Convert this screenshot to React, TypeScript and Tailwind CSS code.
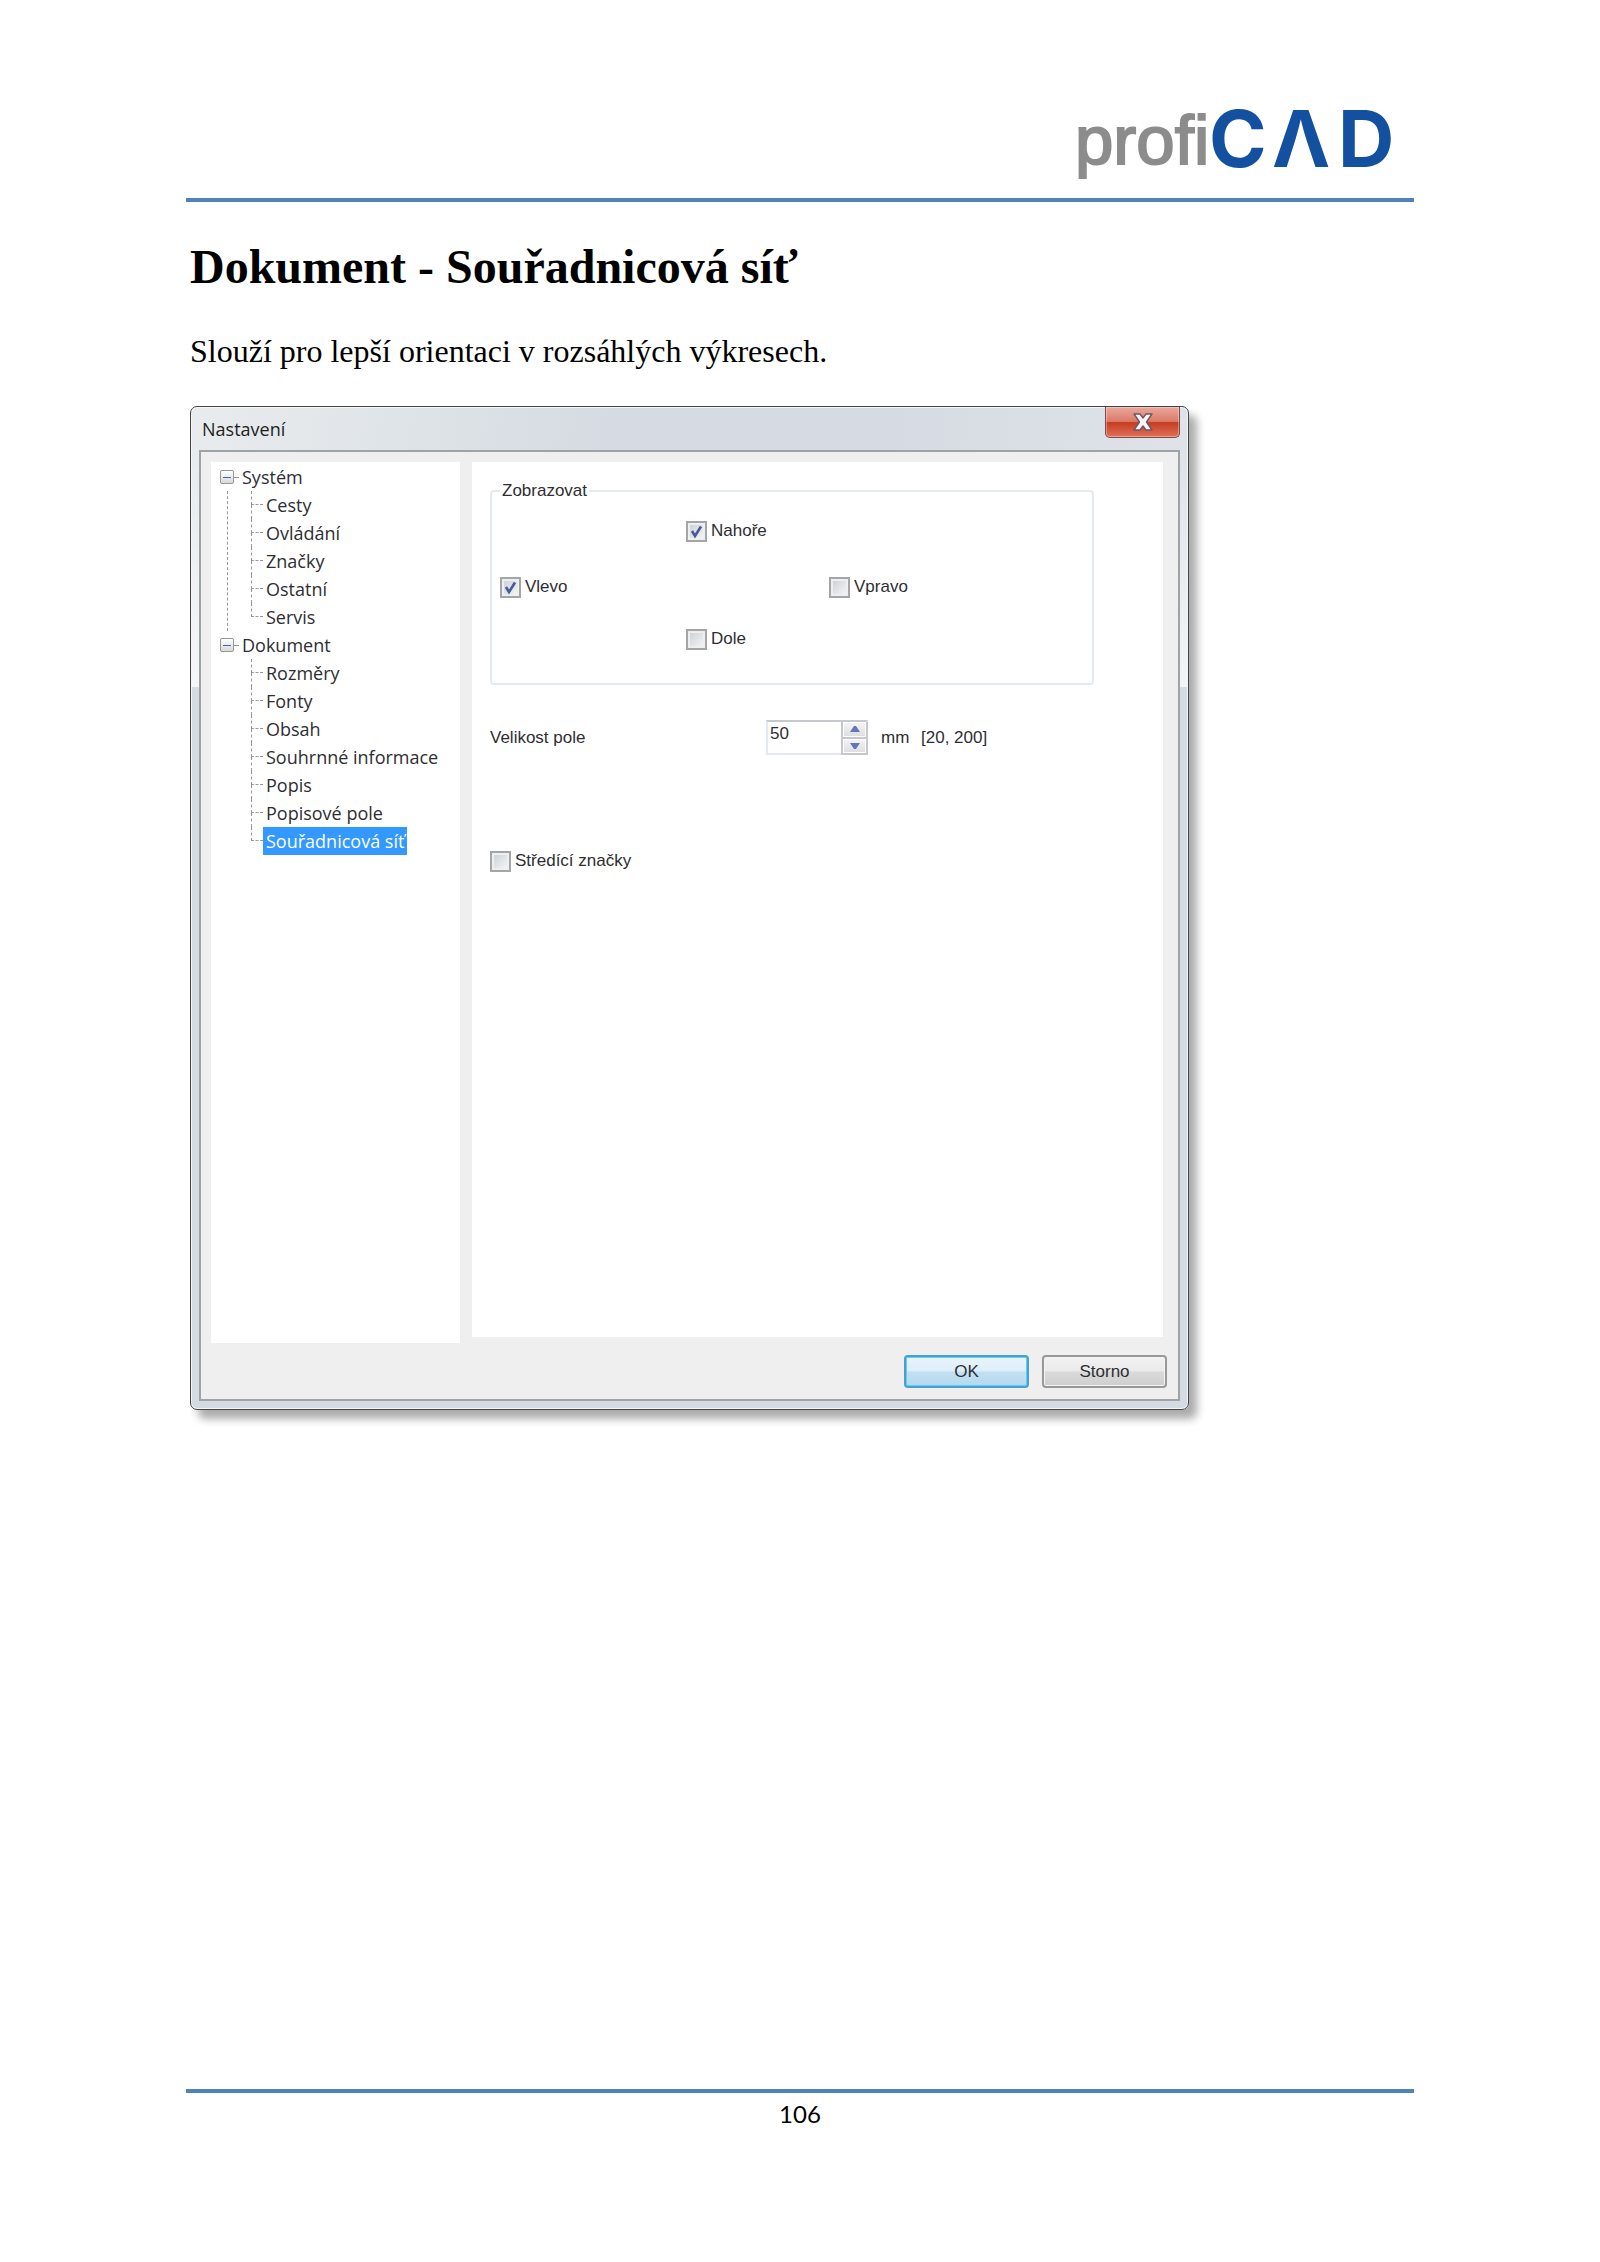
import { useState } from "react";

type TreeGroup = {
  label: string;
  items: string[];
};

const TREE: TreeGroup[] = [
  {
    label: "Systém",
    items: ["Cesty", "Ovládání", "Značky", "Ostatní", "Servis"],
  },
  {
    label: "Dokument",
    items: [
      "Rozměry",
      "Fonty",
      "Obsah",
      "Souhrnné informace",
      "Popis",
      "Popisové pole",
      "Souřadnicová síť",
    ],
  },
];

const MIN_SIZE = 20;
const MAX_SIZE = 200;

function Logo() {
  return (
    <svg width="330" height="100" viewBox="0 -20 330 100" role="img" aria-label="profiCAD">
      <text
        y="56"
        fontSize="69"
        fill="#8c8c8c"
        stroke="#8c8c8c"
        strokeWidth="2"
        className="font-['Liberation_Sans',sans-serif]"
      >
        profi
      </text>
      <text
        x="134 197 263"
        y="59"
        fontSize="78"
        fill="#1450a0"
        className="font-['Inter',sans-serif] font-bold"
      >
        CΛD
      </text>
    </svg>
  );
}

function Checkbox({ label, defaultChecked }: { label: string; defaultChecked?: boolean }) {
  return (
    <label className="flex h-6 w-fit items-center gap-1">
      <span className="relative flex">
        <input
          type="checkbox"
          defaultChecked={defaultChecked}
          className="peer size-[21px] appearance-none border-2 border-[#a3a5a6] bg-linear-to-br from-[#c9ced4] to-[#f8f8f8] shadow-[inset_0_0_0_2px_#eeeff0]"
        />
        <svg
          viewBox="0 0 21 21"
          className="pointer-events-none absolute inset-0 hidden size-[21px] peer-checked:block"
        >
          <path d="M6 10 L9 15 L15 5.5" fill="none" stroke="#465a9c" strokeWidth="2.6" />
        </svg>
      </span>
      {label}
    </label>
  );
}

function Tree({ selected, onSelect }: { selected: string; onSelect: (item: string) => void }) {
  return (
    <ul className="min-h-[881px] w-[249px] shrink-0 bg-white pt-px pl-[9px] font-['Open_Sans',sans-serif] text-[18px] leading-7 text-[#2e2e33]">
      {TREE.map((group, groupIndex) => {
        const isLastGroup = groupIndex === TREE.length - 1;
        return (
          <li key={group.label}>
            <div className="flex h-7 items-center">
              <button
                type="button"
                aria-label={`Sbalit ${group.label}`}
                className="flex size-[14px] items-center justify-center rounded-[2px] border border-[#979797] bg-linear-to-b from-white to-[#d9d9d9]"
              >
                <span className="h-px w-2 bg-[#4a61ad]" />
              </button>
              <span className="mr-[3px] w-[5px] border-t border-dashed border-[#999]" />
              {group.label}
            </div>
            <ul
              className={`ml-[7px] border-l border-dashed pl-[23px] ${
                isLastGroup ? "border-transparent" : "border-[#999]"
              }`}
            >
              {group.items.map((item, i) => (
                <li key={item} className="flex h-7">
                  <span className="flex w-3 flex-col">
                    <span className="h-1/2 border-b border-l border-dashed border-[#999]" />
                    {i < group.items.length - 1 && (
                      <span className="h-1/2 border-l border-dashed border-[#999]" />
                    )}
                  </span>
                  <button
                    type="button"
                    onClick={() => onSelect(item)}
                    className={`px-[3px] whitespace-nowrap ${
                      item === selected ? "bg-[#3399ff] text-white" : ""
                    }`}
                  >
                    {item}
                  </button>
                </li>
              ))}
            </ul>
          </li>
        );
      })}
    </ul>
  );
}

function SizeField() {
  const [size, setSize] = useState(50);
  const step = (delta: number) =>
    setSize((prev) => Math.min(MAX_SIZE, Math.max(MIN_SIZE, prev + delta)));

  return (
    <div className="mt-[35px] flex items-center">
      <label htmlFor="field-size" className="w-[276px]">
        Velikost pole
      </label>
      <div className="flex h-[35px] w-[102px] border-2 border-[#e3e9ef] border-t-[#c5c8cf]">
        <input
          id="field-size"
          type="text"
          inputMode="numeric"
          value={size}
          onChange={(e) => setSize(Number(e.target.value) || 0)}
          className="h-6 w-full min-w-0 flex-1 pl-0.5 outline-none"
        />
        <div className="-mr-0.5 -mb-0.5 flex w-[27px] shrink-0 flex-col gap-0.5 border-2 border-t-0 border-[#c6c7cd] bg-[#c6c7cd]">
          <button
            type="button"
            aria-label="Zvětšit"
            onClick={() => step(1)}
            className="flex flex-1 items-center justify-center border border-white bg-linear-to-b from-[#f4f4f4] to-[#dedfe2]"
          >
            <svg width="10" height="6" viewBox="0 0 10 6">
              <path d="M0 6 L4 0 H6 L10 6 Z" fill="#6476b8" />
            </svg>
          </button>
          <button
            type="button"
            aria-label="Zmenšit"
            onClick={() => step(-1)}
            className="flex flex-1 items-center justify-center border border-white bg-linear-to-b from-[#f4f4f4] to-[#dedfe2]"
          >
            <svg width="10" height="6" viewBox="0 0 10 6">
              <path d="M0 0 L4 6 H6 L10 0 Z" fill="#6476b8" />
            </svg>
          </button>
        </div>
      </div>
      <span className="ml-[13px] w-10">mm</span>
      <span>
        [{MIN_SIZE}, {MAX_SIZE}]
      </span>
    </div>
  );
}

function SettingsDialog() {
  const [selected, setSelected] = useState("Souřadnicová síť");

  return (
    <section className="mt-[35px] w-full max-w-[999px] rounded-[7px] border border-[#3f4447] bg-[linear-gradient(to_bottom,transparent_50px,rgba(255,255,255,0.6)_280px,#d5dbe2_280px),linear-gradient(100deg,#e9ecee,#dfe4e8_18%,#d6dbe3_36%,#d6dbe3_60%,#e4e8ec)] px-2 pb-2 shadow-[inset_0_0_0_1px_#f4f6f8,8px_9px_8px_rgba(0,0,0,0.33)]">
      <header className="flex h-[43px] items-start justify-between pl-[3px]">
        <h2 className="mt-2 font-['Open_Sans',sans-serif] text-[18px] leading-7 text-[#1e1e22]">
          Nastavení
        </h2>
        <button
          type="button"
          aria-label="Zavřít"
          className="flex h-[31px] w-[75px] items-center justify-center rounded-b-[5px] border border-t-0 border-[#7d4a48] bg-[linear-gradient(to_bottom,#eba89b,#dc7a68_48%,#c63c20_52%,#e0705a)] shadow-[inset_0_0_0_1px_rgba(255,255,255,0.35)]"
        >
          <svg width="20" height="18" viewBox="0 0 20 18">
            <path
              d="M1 1 H7 L10 5 L13 1 H19 L13.5 9 L19 17 H13 L10 13 L7 17 H1 L6.500 9 Z"
              fill="#f6f6f6"
              stroke="#6b5866"
              strokeWidth="1.400"
              strokeLinejoin="round"
            />
          </svg>
        </button>
      </header>

      <div className="border-2 border-[#9ea3a6] bg-[#efefef] pt-[10px] pb-[11px] pl-[10px]">
        <div className="flex items-start gap-3 pr-[15px]">
          <Tree selected={selected} onSelect={setSelected} />
          <div className="min-h-[875px] flex-1 bg-white pt-[17px] pr-[69px] pl-[18px] font-['Liberation_Sans',sans-serif] text-[17px] leading-6 text-[#2e2e32]">
            <fieldset className="rounded-[4px] border-2 border-[#e4ebf0] px-2 pb-8">
              <legend className="px-0.5">Zobrazovat</legend>
              <div className="grid grid-cols-[186px_143px_1fr] grid-rows-[56px_52px_24px] pt-4">
                <div className="col-start-2">
                  <Checkbox label="Nahoře" defaultChecked />
                </div>
                <div className="col-start-1 row-start-2">
                  <Checkbox label="Vlevo" defaultChecked />
                </div>
                <div className="col-start-3 row-start-2">
                  <Checkbox label="Vpravo" />
                </div>
                <div className="col-start-2 row-start-3">
                  <Checkbox label="Dole" />
                </div>
              </div>
            </fieldset>
            <SizeField />
            <div className="mt-[94px]">
              <Checkbox label="Středící značky" />
            </div>
          </div>
        </div>

        <div className="mt-3 flex justify-end gap-[13px] pr-[11px] font-['Liberation_Sans',sans-serif] text-[17px] text-[#2e2e32]">
          <button
            type="button"
            className="h-[33px] w-[125px] rounded-[4px] border-2 border-[#4a9fd0] bg-[linear-gradient(to_bottom,#eaf4fb,#dceefa_48%,#c3e0f1_52%,#b3d9ee)] shadow-[inset_0_0_0_1px_#5fd0f5]"
          >
            OK
          </button>
          <button
            type="button"
            className="h-[33px] w-[125px] rounded-[4px] border-2 border-[#989898] bg-[linear-gradient(to_bottom,#f2f2f2,#eaeaea_48%,#dadada_52%,#cecece)] shadow-[inset_0_0_0_1px_#f4f4f4]"
          >
            Storno
          </button>
        </div>
      </div>
    </section>
  );
}

export default function App() {
  return (
    <div className="flex min-h-screen flex-col bg-white px-[186px] text-black">
      <header className="flex justify-end border-b-4 border-[#4f81bd] pt-[88px] pr-[9px] pb-[10px]">
        <Logo />
      </header>

      <main className="px-1">
        <h1 className="mt-[37px] font-['Liberation_Serif',serif] text-5xl leading-[56px] font-bold">
          Dokument - Souřadnicová síť
        </h1>
        <p className="mt-9 font-['Liberation_Serif',serif] text-[32px] leading-10">
          Slouží pro lepší orientaci v rozsáhlých výkresech.
        </p>
        <SettingsDialog />
      </main>

      <footer className="mt-auto border-t-4 border-[#4f81bd] pt-[3px] pb-[130px] text-center font-['Lato',sans-serif] text-2xl leading-9">
        106
      </footer>
    </div>
  );
}
